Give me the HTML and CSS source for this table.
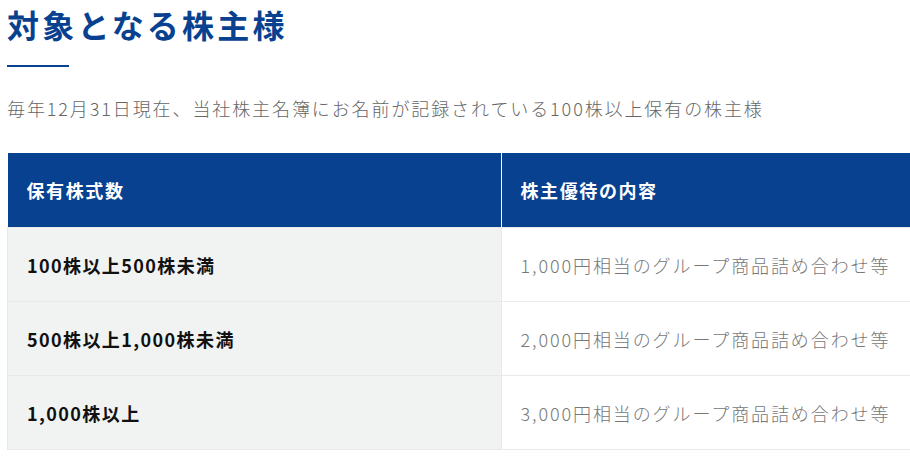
FILE: index.html
```html
<!DOCTYPE html>
<html lang="ja">
<head>
<meta charset="utf-8">
<link rel="stylesheet" href="styles.css">
</head>
<body>
<div class="page">
  <h1 class="title">対象となる株主様</h1>
  <div class="rule"></div>
  <p class="lead">毎年12月31日現在、当社株主名簿にお名前が記録されている100株以上保有の株主様</p>
  <table class="benefits">
    <thead>
      <tr><th class="col-a">保有株式数</th><th class="col-b">株主優待の内容</th></tr>
    </thead>
    <tbody>
      <tr><td class="shares">100株以上500株未満</td><td class="gift">1,000円相当のグループ商品詰め合わせ等</td></tr>
      <tr><td class="shares">500株以上1,000株未満</td><td class="gift">2,000円相当のグループ商品詰め合わせ等</td></tr>
      <tr><td class="shares">1,000株以上</td><td class="gift">3,000円相当のグループ商品詰め合わせ等</td></tr>
    </tbody>
  </table>
</div>
</body>
</html>
```

FILE: styles.css
```css
html, body {
  margin: 0;
  padding: 0;
  background: #ffffff;
}
body {
  font-family: "Noto Sans CJK JP", "Noto Sans", sans-serif;
  letter-spacing: 0.1em;
  overflow: hidden;
}
.page {
  padding-left: 7px;
}
.title {
  margin: 0;
  font-size: 32px;
  line-height: 48px;
  font-weight: 700;
  color: #08418f;
  letter-spacing: 0.1em;
}
.rule {
  width: 62px;
  height: 2px;
  background: #08418f;
  margin-top: 17px;
}
.lead {
  margin: 26px 0 0;
  font-size: 18px;
  line-height: 30px;
  font-weight: 300;
  color: #666666;
  letter-spacing: 1.9px;
}
.benefits {
  margin-top: 30px;
  width: 910px;
  border-collapse: collapse;
  font-size: 18px;
}
.benefits th {
  background: #08418f;
  color: #ffffff;
  font-weight: 700;
  text-align: left;
  height: 74px;
  padding: 0 0 0 19px;
  border-right: 1px solid #ffffff;
}
.benefits th.col-b {
  border-right: 0;
}
.col-a { width: 474px; }
.benefits td {
  height: 73px;
  padding: 0 0 0 19px;
  border: 1px solid #e8e9e9;
}
.benefits td.shares {
  background: #f1f3f2;
  color: #111111;
  font-weight: 700;
  letter-spacing: 1.4px;
}
.benefits td.gift {
  background: #ffffff;
  color: #777777;
  font-weight: 300;
  letter-spacing: 1.9px;
}
```
